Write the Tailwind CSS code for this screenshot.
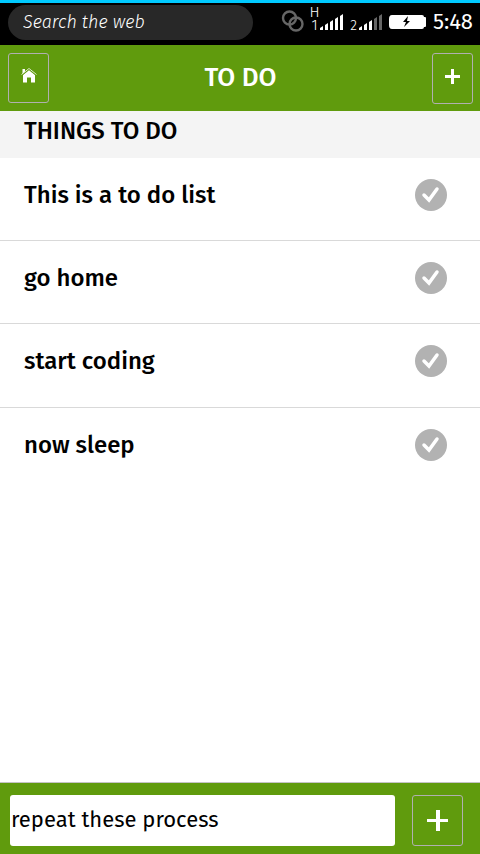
<!DOCTYPE html>
<html lang="en">
<head>
<meta charset="utf-8">
<meta name="viewport" content="width=device-width, initial-scale=1">
<title>To do</title>
<script src="https://cdn.jsdelivr.net/npm/@tailwindcss/browser@4"></script>
</head>
<body class="flex min-h-screen flex-col bg-white font-['Fira_Sans','Noto_Sans',sans-serif] text-black">
  <!-- Status bar -->
  <div class="flex h-[45px] items-start border-t-3 border-[#00caff] bg-black pr-[7px] pl-2 text-white">
    <input type="search" aria-label="Search the web" placeholder="Search the web" class="mt-[2px] h-[35px] min-w-0 flex-1 appearance-none rounded-full bg-[#282828] px-[15px] pb-[2px] text-lg font-light italic outline-none placeholder:text-white">
    <div class="ml-[28px] flex h-[38px] items-center">
      <svg class="h-6 w-6" viewBox="0 0 24 24" fill="none" stroke="#666" stroke-width="2.400" aria-hidden="true"><circle cx="8.500" cy="8" r="6.500"/><circle cx="15" cy="14" r="6.500"/></svg>
      <div class="ml-1 flex h-[32px] w-[11px] flex-col text-center text-[15px] leading-[13px] font-light"><span>H</span><span>1</span></div>
      <svg class="h-[30px] w-6" viewBox="0 0 24 30" fill="#fff" aria-hidden="true"><path d="M0 21l3-2v4H0zM5 18l3-2v7H5zM10 15l3-2v10h-3zM15 12l3-2v13h-3zM20 9l3-2v16h-3z"/></svg>
      <span class="ml-1 w-[11px] pt-2 text-center text-[14px] leading-[18px] font-light">2</span>
      <svg class="h-[30px] w-6" viewBox="0 0 24 30" fill="#fff" aria-hidden="true"><path d="M0 21l3-2v4H0zM5 18l3-2v7H5zM10 15l3-2v10h-3z"/><path fill="#666" d="M15 12l3-2v13h-3zM20 9l3-2v16h-3z"/></svg>
      <svg class="ml-[6px] h-[16px] w-[39px]" viewBox="0 0 39 16" aria-hidden="true"><path fill="#fff" d="M3 1h30q2 0 2 2h1q1 0 1 1v8q0 1-1 1h-1q0 2-2 2H3Q0 15 0 11V5Q0 1 3 1z"/><path d="M19 2l-5 6h3l-2 5 6-6h-3z"/></svg>
      <time class="ml-1 w-[41px] text-right text-[22px] leading-[34px] whitespace-nowrap">5:48</time>
    </div>
  </div>

  <header class="flex h-[66px] items-start justify-between bg-[#609b0d] px-[7px] pt-2 pl-2 text-white">
    <button type="button" aria-label="Home" class="flex h-[50px] w-[41px] items-center justify-center rounded-[3px] border border-[#b0b0b0] pb-[6px]">
      <svg class="h-4 w-4" viewBox="0 0 16 16" aria-hidden="true"><path fill="#fff" d="M1.500 2H4v2.500L1.500 7zM8 3l6 5v7.500h-4v-5H6v5H2V8z"/><path d="M.5 7.500L8 1.500l7.500 6" fill="none" stroke="#fff" stroke-width=".8"/><path d="M1.500 8L8 2.800 14.500 8" fill="none" stroke="#609b0d" stroke-width=".5"/></svg>
    </button>
    <h1 class="text-[26px] leading-[50px] font-medium">TO DO</h1>
    <button type="button" aria-label="New item" class="flex h-[51px] w-[41px] items-center justify-center rounded-[3px] border border-[#b0b0b0] pb-[5px]">
      <svg class="h-[15px] w-[15px]" viewBox="0 0 15 15" fill="#fff" aria-hidden="true"><path d="M6 0h3v6h6v3H9v6H6V9H0V6h6z"/></svg>
    </button>
  </header>

  <main class="flex-1">
    <h2 class="h-[47px] bg-[#f4f4f4] px-6 text-2xl leading-10 font-medium">THINGS TO DO</h2>
    <ul class="text-2xl font-medium">
      <li class="flex h-[83px] items-start justify-between border-b border-[#d9d9d9] pt-[21px] pr-[33px] pl-6"><span class="leading-8">This is a to do list</span>
        <button type="button" aria-label="Complete: This is a to do list"><svg class="block h-8 w-8" viewBox="0 0 32 32"><circle cx="16" cy="16" r="16" fill="#b2b2b2"/><path d="M9 16l5 5 8-11" fill="none" stroke="#fff" stroke-width="3.500" stroke-linecap="round"/></svg></button></li>
      <li class="flex h-[83px] items-start justify-between border-b border-[#d9d9d9] pt-[21px] pr-[33px] pl-6"><span class="leading-8">go home</span>
        <button type="button" aria-label="Complete: go home"><svg class="block h-8 w-8" viewBox="0 0 32 32"><circle cx="16" cy="16" r="16" fill="#b2b2b2"/><path d="M9 16l5 5 8-11" fill="none" stroke="#fff" stroke-width="3.500" stroke-linecap="round"/></svg></button></li>
      <li class="flex h-[84px] items-start justify-between border-b border-[#d9d9d9] pt-[21px] pr-[33px] pl-6"><span class="leading-8">start coding</span>
        <button type="button" aria-label="Complete: start coding"><svg class="block h-8 w-8" viewBox="0 0 32 32"><circle cx="16" cy="16" r="16" fill="#b2b2b2"/><path d="M9 16l5 5 8-11" fill="none" stroke="#fff" stroke-width="3.500" stroke-linecap="round"/></svg></button></li>
      <li class="flex h-[83px] items-start justify-between pt-[21px] pr-[33px] pl-6"><span class="leading-8">now sleep</span>
        <button type="button" aria-label="Complete: now sleep"><svg class="block h-8 w-8" viewBox="0 0 32 32"><circle cx="16" cy="16" r="16" fill="#b2b2b2"/><path d="M9 16l5 5 8-11" fill="none" stroke="#fff" stroke-width="3.500" stroke-linecap="round"/></svg></button></li>
    </ul>
  </main>

  <form class="flex items-center gap-[17px] border-t border-[#c4c4c4] bg-[#609b0d] pt-3 pr-[17px] pb-2 pl-[10px]">
    <input type="text" aria-label="New task" value="repeat these process" class="h-[51px] min-w-0 flex-1 rounded-[3px] bg-white px-px pb-[2px] text-[22px] text-black outline-none">
    <button type="button" aria-label="Add task" class="flex h-[51px] w-[51px] items-center justify-center rounded-[3px] border border-[#b0b0b0]">
      <svg class="h-[21px] w-[21px]" viewBox="0 0 21 21" fill="#fff" aria-hidden="true"><path d="M9 0h4v9h8v3h-8v9H9v-9H0V9h9z"/></svg>
    </button>
  </form>
</body>
</html>
